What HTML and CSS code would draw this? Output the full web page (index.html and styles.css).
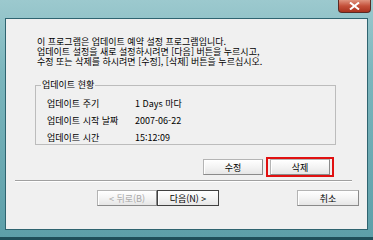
FILE: index.html
```html
<!DOCTYPE html>
<html lang="ko">
  <head>
    <meta charset="UTF-8" />
    <title>업데이트 예약 설정</title>
    <link rel="stylesheet" href="styles.css">
  </head>
  <body>
    <div class="window">
      <div class="titlebar">
        <button class="close-btn" aria-label="닫기">
          <svg width="11" height="8" viewBox="0 0 11 8">
            <path d="M1 0.5 L10 7.5 M10 0.5 L1 7.5" stroke="#fff" stroke-width="2" />
          </svg>
        </button>
      </div>

      <div class="client">
        <p class="intro">
          이 프로그램은 업데이트 예약 설정 프로그램입니다.<br />
          업데이트 설정을 새로 설정하시려면 [다음] 버튼을 누르시고,<br />
          수정 또는 삭제를 하시려면 [수정], [삭제] 버튼을 누르십시오.
        </p>

        <fieldset class="group">
          <legend>업데이트 현황</legend>
          <div class="row">
            <span class="label">업데이트 주기</span>
            <span class="value">1 Days 마다</span>
          </div>
          <div class="row">
            <span class="label">업데이트 시작 날짜</span>
            <span class="value">2007-06-22</span>
          </div>
          <div class="row">
            <span class="label">업데이트 시간</span>
            <span class="value">15:12:09</span>
          </div>
        </fieldset>

        <div class="actions">
          <button class="btn">수정</button>
          <span class="highlight"><button class="btn">삭제</button></span>
        </div>

        <div class="separator"></div>

        <div class="nav">
          <button class="btn" disabled>&lt; 뒤로(B)</button>
          <button class="btn btn-default">다음(N) &gt;</button>
          <button class="btn btn-cancel">취소</button>
        </div>
      </div>
    </div>
  </body>
</html>
```

FILE: styles.css
```css
* {
  box-sizing: border-box;
  margin: 0;
  padding: 0;
  font-family: "Noto Sans CJK KR", "DejaVu Sans", sans-serif;
}

body {
  width: 373px;
  height: 240px;
  overflow: hidden;
  background: #fff;
}

.window {
  width: 373px;
  height: 240px;
  display: flex;
  flex-direction: column;
  padding: 0 5px 7px 5px;
  background: linear-gradient(to bottom, #9cc9ce, #7cb6bd 30%, #5d9fa9);
  border-bottom: 3px solid #1f4f5a;
}

.titlebar {
  height: 18px;
  display: flex;
  justify-content: flex-end;
  margin-right: -3px;
}

.close-btn {
  width: 33px;
  height: 13px;
  border: 1px solid #5a2a24;
  border-top: none;
  border-radius: 0 0 4px 4px;
  background: linear-gradient(to bottom, #e0947f, #c4503a 50%, #a8321e);
  display: flex;
  align-items: center;
  justify-content: center;
}

.client {
  flex: 1;
  background: #f0f0f0;
  border: 1px solid #2f6470;
  font-size: 9px;
  color: #000;
}

.intro {
  padding: 18px 0 0 31px;
  line-height: 10px;
  font-size: 9px;
  height: 48px;
}

.group {
  margin: 13px 0 0 29px;
  width: 301px;
  height: 65px;
  border: 1px solid #bcbcbc;
  padding: 5px 0 0 0;
}

.group legend {
  margin-left: 5px;
  padding: 0 1px;
  line-height: 10px;
}

.row {
  display: flex;
  height: 17px;
  align-items: center;
  line-height: 10px;
  padding-left: 11px;
}

.label {
  width: 88px;
}

.actions {
  display: flex;
  justify-content: flex-end;
  align-items: center;
  gap: 3px;
  margin: 12px 33px 0 0;
  height: 20px;
}

.btn {
  width: 60px;
  height: 16px;
  font-size: 9px;
  color: #000;
  background: linear-gradient(to bottom, #ffffff, #f4f4f4 50%, #e6e6e6);
  border: 1px solid #b4b4b4;
  border-right-color: #8a8a8a;
  border-bottom-color: #8a8a8a;
  box-shadow: inset 1px 1px 0 #fff;
}

.highlight {
  border: 2px solid #e01010;
  padding: 0 2px;
  height: 20px;
  display: flex;
  align-items: center;
}

.separator {
  margin: 3px 15px 0 9px;
  height: 2px;
  border-top: 1px solid #a0a0a0;
  border-bottom: 1px solid #fff;
}

.nav {
  display: flex;
  align-items: center;
  margin: 8px 0 0 91px;
  padding-right: 8px;
}

.nav .btn:disabled {
  color: #a8a8a8;
}

.btn-default {
  width: 62px;
  border: 1px solid #404040;
}

.btn-cancel {
  margin-left: auto;
  width: 62px;
}
```
